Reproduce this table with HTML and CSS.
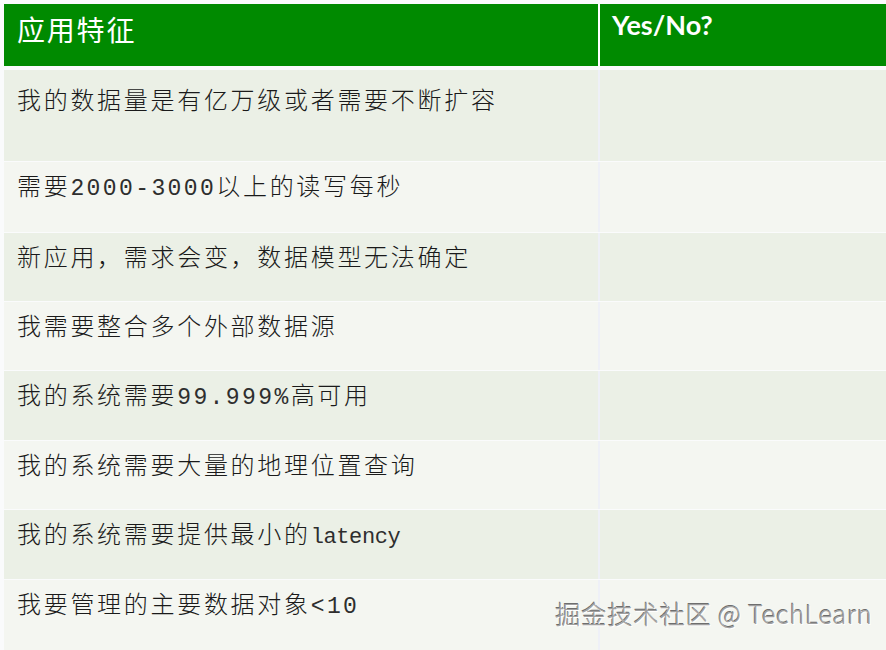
FILE: index.html
```html
<!DOCTYPE html>
<html lang="zh-CN">
<head>
<meta charset="utf-8">
<title>应用特征</title>
<link rel="stylesheet" href="styles.css">
</head>
<body>
<div class="table">
  <div class="row head">
    <div class="cell c1">应用特征</div>
    <div class="cell c2">Yes/No?</div>
  </div>
  <div class="row odd tall">
    <div class="cell c1">我的数据量是有亿万级或者需要不断扩容</div>
    <div class="cell c2"></div>
  </div>
  <div class="row even h70">
    <div class="cell c1">需要<span class="latin">2000-3000</span>以上的读写每秒</div>
    <div class="cell c2"></div>
  </div>
  <div class="row odd h68">
    <div class="cell c1">新应用，需求会变，数据模型无法确定</div>
    <div class="cell c2"></div>
  </div>
  <div class="row even h68">
    <div class="cell c1">我需要整合多个外部数据源</div>
    <div class="cell c2"></div>
  </div>
  <div class="row odd h69">
    <div class="cell c1">我的系统需要<span class="latin">99.999%</span>高可用</div>
    <div class="cell c2"></div>
  </div>
  <div class="row even h68">
    <div class="cell c1">我的系统需要大量的地理位置查询</div>
    <div class="cell c2"></div>
  </div>
  <div class="row odd h69">
    <div class="cell c1">我的系统需要提供最小的<span class="latin narrow">latency</span></div>
    <div class="cell c2"></div>
  </div>
  <div class="row even h70">
    <div class="cell c1">我要管理的主要数据对象<span class="latin">&lt;10</span></div>
    <div class="cell c2"></div>
  </div>
</div>
<div class="watermark">掘金技术社区 @ TechLearn</div>
</body>
</html>
```

FILE: styles.css
```css
html, body {
  margin: 0;
  padding: 0;
  background: #ffffff;
}
body {
  width: 886px;
  height: 650px;
  overflow: hidden;
  position: relative;
  font-family: "Noto Sans CJK SC", sans-serif;
}
.table {
  display: flex;
  flex-direction: column;
  gap: 1px;
  padding: 4px 0 0 4px;
  background: #fafbfc;
}
.row {
  display: grid;
  grid-template-columns: 594px 1fr;
  column-gap: 2px;
  background: #eef0f7;
}
.cell {
  box-sizing: border-box;
}
.head {
  height: 62px;
  margin-bottom: 3px;
  background: #ffffff;
}
.head .cell {
  background: #008a00;
  color: #ffffff;
}
.head .c1 {
  font-size: 28px;
  line-height: 28px;
  letter-spacing: 1.8px;
  padding: 11px 0 0 13px;
}
.head .c2 {
  font-family: "Lato", "Open Sans", sans-serif;
  font-weight: 700;
  font-size: 27px;
  line-height: 26px;
  padding: 8px 0 0 12px;
}
.odd .cell { background: #ebf0e6; }
.even .cell { background: #f4f6f1; }
.tall { height: 91px; }
.h70 { height: 70px; }
.h69 { height: 69px; }
.h68 { height: 68px; }
.row:not(.head) .c1 {
  font-size: 24px;
  line-height: 24px;
  letter-spacing: 2.7px;
  color: #1a1a1a;
  font-weight: 300;
  padding: 11px 0 0 13px;
}
.tall .c1 {
  padding-top: 17px !important;
}
.latin {
  font-family: "Liberation Mono", monospace;
  font-size: 23px;
  letter-spacing: 2.4px;
  font-weight: 400;
  color: #2e2e2e;
}
.latin.narrow {
  font-size: 22px;
  letter-spacing: -0.4px;
}
.watermark {
  position: absolute;
  left: 555px;
  top: 597px;
  font-family: "Noto Sans CJK SC", sans-serif;
  font-weight: 300;
  font-size: 25.5px;
  line-height: 32px;
  color: #a0a0a0;
  letter-spacing: 0.6px;
  text-shadow: 1px 1px 0 #ffffff, -0.6px -0.6px 0 #6e6e6e;
  white-space: nowrap;
}
```
